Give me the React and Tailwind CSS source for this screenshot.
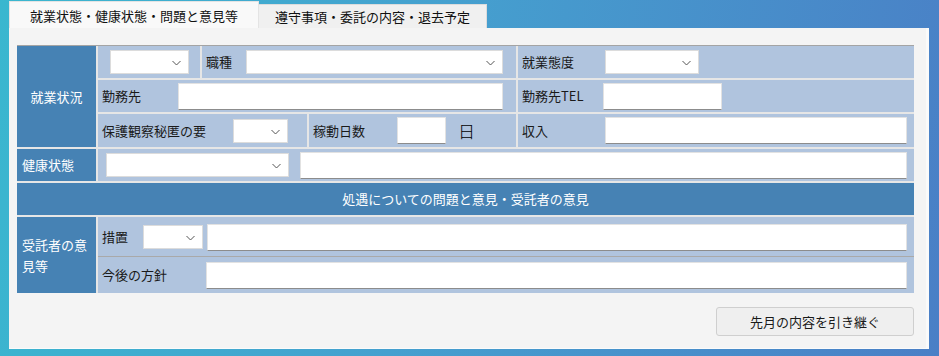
import React from 'react'

const font = { fontFamily: '"Noto Sans CJK JP", "Noto Sans", sans-serif' }

function Chevron() {
  return (
    <svg width="9" height="6" viewBox="0 0 9 6" className="absolute right-[7px] top-1/2 -translate-y-[30%]">
      <polyline points="0.5,0.8 4.5,4.8 8.5,0.8" fill="none" stroke="#555" strokeWidth="1" />
    </svg>
  )
}

function Select({ w, cls = '' }) {
  return (
    <div className={'relative h-[24px] bg-white border border-[#dcdcdc] ' + cls} style={{ width: w }}>
      <Chevron />
    </div>
  )
}

function Input({ w, cls = '', h = 'h-[27px]' }) {
  return (
    <div
      className={h + ' bg-white border border-[#e2e2e2] border-b-[#8c8c8c] ' + cls}
      style={w ? { width: w } : undefined}
    />
  )
}

function Cell({ w, children, cls = '' }) {
  return (
    <div
      className={'flex items-center bg-[#b0c4de] text-[13px] text-[#1a1a1a] ' + (w ? '' : 'flex-1 ') + cls}
      style={w ? { width: w } : undefined}
    >
      {children}
    </div>
  )
}

export default function App() {
  return (
    <div
      className="w-[939px] h-[356px] bg-[linear-gradient(100deg,#3ab7cf_0%,#45a0cf_45%,#4a7fc6_100%)] overflow-hidden"
      style={font}
    >
      {/* tabs */}
      <div className="flex items-end h-[28px] pl-[9px]">
        <div className="w-[250px] h-[27px] bg-[#f9f9f9] border border-b-0 border-[#e4e4e4] text-[13px] text-[#111] pl-[20px] pt-[4px]">
          就業状態・健康状態・問題と意見等
        </div>
        <div className="w-[228px] h-[24px] bg-[#f0f0f0] border border-b-0 border-l-0 border-[#dcdcdc] text-[13px] text-[#111] pl-[16px] pt-[2px]">
          遵守事項・委託の内容・退去予定
        </div>
      </div>

      {/* panel */}
      <div className="ml-[9px] w-[920px] h-[321px] bg-[#f4f4f4] border-r-[3px] border-r-[#fafafa] border-b border-b-[#fbfbfb] pl-[8px] pt-[17px]">
        <div className="w-[897px] bg-[#e6e6e6] border-t border-t-[#a4a4a4] flex flex-col gap-[2px]">
          {/* 就業状況 block */}
          <div className="flex gap-[2px]">
            <div className="w-[79px] bg-[#4682b4] text-white text-[13px] flex items-center justify-center">
              就業状況
            </div>
            <div className="flex-1 flex flex-col gap-[2px]">
              <div className="flex gap-[2px] h-[32px]">
                <Cell w={102} cls="justify-center">
                  <Select w={79} />
                </Cell>
                <Cell w={314} cls="pl-[4px]">
                  <span>職種</span>
                  <Select w={257} cls="ml-[14px]" />
                </Cell>
                <Cell cls="pl-[4px]">
                  <span>就業態度</span>
                  <Select w={94} cls="ml-[31px]" />
                </Cell>
              </div>
              <div className="flex gap-[2px] h-[32px]">
                <Cell w={418} cls="pl-[4px]">
                  <span>勤務先</span>
                  <Input w={325} cls="ml-[37px]" />
                </Cell>
                <Cell cls="pl-[4px]">
                  <span>勤務先TEL</span>
                  <Input w={119} cls="ml-[19px]" />
                </Cell>
              </div>
              <div className="flex gap-[2px] h-[33px]">
                <Cell w={209} cls="pl-[4px]">
                  <span>保護観察秘匿の要</span>
                  <Select w={55} cls="ml-[27px]" />
                </Cell>
                <Cell w={207} cls="pl-[4px]">
                  <span>稼動日数</span>
                  <Input w={49} cls="ml-[32px]" />
                  <span className="ml-[12px] text-[17px] font-light text-black">日</span>
                </Cell>
                <Cell cls="pl-[4px]">
                  <span>収入</span>
                  <Input w={302} cls="ml-[57px]" />
                </Cell>
              </div>
            </div>
          </div>

          {/* 健康状態 */}
          <div className="flex gap-[2px] h-[32px]">
            <div className="w-[79px] bg-[#4682b4] text-white text-[13px] flex items-center pl-[5px]">
              健康状態
            </div>
            <Cell cls="pl-[8px]">
              <Select w={183} />
              <Input w={607} cls="ml-[11px]" />
            </Cell>
          </div>

          {/* header */}
          <div className="h-[32px] bg-[#4682b4] text-white text-[13px] flex items-center justify-center">
            処遇についての問題と意見・受託者の意見
          </div>

          {/* 受託者の意見等 */}
          <div className="flex gap-[2px]">
            <div className="w-[79px] bg-[#4682b4] text-white text-[13px] leading-[21px] flex items-center pl-[5px] pr-[4px]">
              受託者の意見等
            </div>
            <div className="flex-1 flex flex-col gap-[1px] bg-[#a9a9a9]">
              <div className="h-[39px] flex items-center bg-[#b0c4de] text-[13px] text-[#1a1a1a] pl-[4px] pt-[1px]">
                <span>措置</span>
                <Select w={60} cls="ml-[15px]" />
                <Input cls="ml-[4px] flex-1 mr-[7px]" />
              </div>
              <div className="h-[36px] flex items-center bg-[#b0c4de] text-[13px] text-[#1a1a1a] pl-[4px]">
                <span>今後の方針</span>
                <Input cls="ml-[39px] flex-1 mr-[7px]" />
              </div>
            </div>
          </div>
        </div>

        {/* button */}
        <div className="w-[897px] flex justify-end mt-[14px]">
          <div className="w-[198px] h-[29px] bg-[#efefef] border border-[#cfcfcf] rounded-[3px] text-[13px] text-[#1a1a1a] flex items-center justify-center">
            先月の内容を引き継ぐ
          </div>
        </div>
      </div>
    </div>
  )
}
